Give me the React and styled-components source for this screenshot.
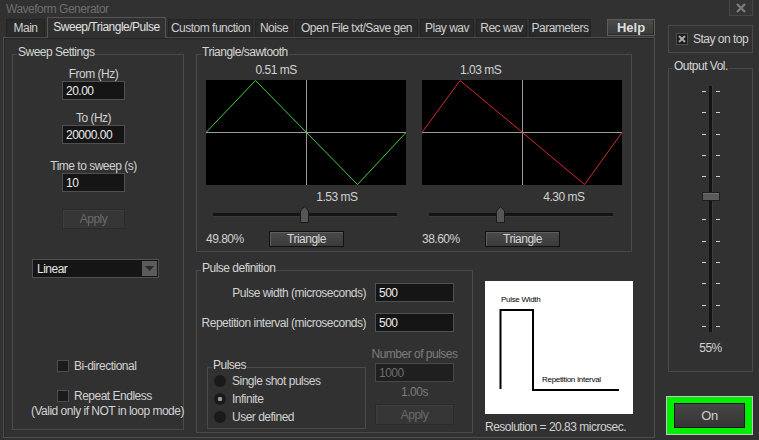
import React from 'react';
import styled, { createGlobalStyle } from 'styled-components';

const GlobalStyle = createGlobalStyle`
  html, body {
    margin: 0;
    padding: 0;
    background: #313131;
  }
  body {
    font-family: "Liberation Sans", Arial, sans-serif;
    font-size: 12px;
    letter-spacing: -0.5px;
    color: #d2d2d2;
  }
  * { box-sizing: border-box; }
`;

const tabs = [
    { label: 'Main', width: 39 },
    { label: 'Sweep/Triangle/Pulse', width: 119, active: true },
    { label: 'Custom function', width: 85 },
    { label: 'Noise', width: 38 },
    { label: 'Open File txt/Save gen', width: 123 },
    { label: 'Play wav', width: 54 },
    { label: 'Rec wav', width: 51 },
    { label: 'Parameters', width: 62 },
];

// peak / trough are x positions inside the 200px plot
const channels = [
    { color: '#3fd23f', peak: 49.5, trough: 151.5, top: '0.51 mS', bottom: '1.53 mS', value: 49.8 },
    { color: '#d42a2a', peak: 38, trough: 162.5, top: '1.03 mS', bottom: '4.30 mS', value: 38.6 },
];

const TRACK_LEFT = 7;
const TRACK_WIDTH = 184;
const VOL_HEIGHT = 246;

function Channel({ ch }) {
    const thumbLeft = TRACK_LEFT + (ch.value / 100) * TRACK_WIDTH - 4.5;
    return (
        <ChannelCol>
            <PeakLabel style={{ marginLeft: ch.peak }}>{ch.top}</PeakLabel>
            <Plot width="200" height="105">
                <rect width="200" height="105" fill="#000" />
                <line x1="0" y1="52.5" x2="200" y2="52.5" stroke="#9a9a9a" />
                <line x1="100.5" y1="0" x2="100.5" y2="105" stroke="#9a9a9a" />
                <polyline
                    points={`0,52.5 ${ch.peak},0.5 100.5,52.5 ${ch.trough},104.5 200,52.5`}
                    stroke={ch.color}
                    fill="none"
                />
            </Plot>
            <TroughLabel style={{ width: ch.trough }}>{ch.bottom}</TroughLabel>
            <HSlider>
                <HTrack />
                <HThumb width="9" height="17" style={{ left: thumbLeft }}>
                    <path d="M0.5 16.5 V5 L4.5 0.5 L8.5 5 V16.5 Z" fill="#555" stroke="#1a1a1a" />
                </HThumb>
            </HSlider>
            <ChannelFooter>
                <Percent>{ch.value.toFixed(2)}%</Percent>
                <Button $w={75} $h={16}>Triangle</Button>
            </ChannelFooter>
        </ChannelCol>
    );
}

function CheckRow({ label, checked, ml, mt }) {
    return (
        <CheckLine $ml={ml} $mt={mt}>
            <CheckBox>
                {checked && (
                    <svg width="10" height="10">
                        <path d="M2 2 L8 8 M8 2 L2 8" stroke="#a8a8a8" strokeWidth="2" />
                    </svg>
                )}
            </CheckBox>
            <span>{label}</span>
        </CheckLine>
    );
}

function Radio({ label, checked }) {
    return (
        <RadioLine>
            <RadioDot $checked={checked} />
            <span>{label}</span>
        </RadioLine>
    );
}

export default function App() {
    const volThumbTop = (1 - 0.55) * VOL_HEIGHT - 4.5;
    return (
        <>
            <GlobalStyle />
            <Window>
                <TitleBar>
                    <Title>Waveform Generator</Title>
                    <CloseBox>
                        <svg width="10" height="10">
                            <path d="M1 1 L9 9 M9 1 L1 9" stroke="#7a7a7a" strokeWidth="2.4" />
                        </svg>
                    </CloseBox>
                </TitleBar>
                <Body>
                    <Main>
                        <TabBar>
                            {tabs.map(t => (
                                <Tab key={t.label} $w={t.width} $active={t.active}>{t.label}</Tab>
                            ))}
                            <HelpButton>Help</HelpButton>
                        </TabBar>
                        <Panel>
                            <Group $w={172} $h={384}>
                                <Legend>Sweep Settings</Legend>
                                <SweepBody>
                                    <Stack>
                                        <Caption>From (Hz)</Caption>
                                        <Field $w={63} readOnly value="20.00" />
                                        <Caption $mt={11}>To (Hz)</Caption>
                                        <Field $w={63} readOnly value="20000.00" />
                                        <Caption $mt={15}>Time to sweep (s)</Caption>
                                        <Field $w={63} readOnly value="10" />
                                        <Button $w={63} $h={20} $mt={17} disabled>Apply</Button>
                                    </Stack>
                                    <Select>
                                        <span>Linear</span>
                                        <SelectArrow>
                                            <svg width="9" height="5">
                                                <path d="M0 0 H9 L4.5 5 Z" fill="#2a2a2a" />
                                            </svg>
                                        </SelectArrow>
                                    </Select>
                                    <CheckRow label="Bi-directional" ml={44} mt={81} />
                                    <CheckRow label="Repeat Endless" ml={44} mt={16} />
                                    <Note>(Valid only if NOT in loop mode)</Note>
                                </SweepBody>
                            </Group>
                            <RightArea>
                                <Group $w={436} $h={206}>
                                    <Legend>Triangle/sawtooth</Legend>
                                    <ChannelRow>
                                        {channels.map(ch => <Channel key={ch.top} ch={ch} />)}
                                    </ChannelRow>
                                </Group>
                                <PulseRow>
                                    <Group $w={277} $h={171}>
                                        <Legend>Pulse definition</Legend>
                                        <FieldRow $mt={5}>
                                            <RowLabel>Pulse width (microseconds)</RowLabel>
                                            <Field $w={79} readOnly value="500" />
                                        </FieldRow>
                                        <FieldRow $mt={11}>
                                            <RowLabel>Repetition interval (microseconds)</RowLabel>
                                            <Field $w={79} readOnly value="500" />
                                        </FieldRow>
                                        <PulseLower>
                                            <PulsesGroup $w={159} $h={70}>
                                                <Legend>Pulses</Legend>
                                                <RadioList>
                                                    <Radio label="Single shot pulses" />
                                                    <Radio label="Infinite" checked />
                                                    <Radio label="User defined" />
                                                </RadioList>
                                            </PulsesGroup>
                                            <CountCol>
                                                <Caption $dim>Number of pulses</Caption>
                                                <Field $w={79} $mt={2} disabled value="1000" readOnly />
                                                <Caption $dim $mt={3}>1.00s</Caption>
                                                <Button $w={79} $h={21} $mt={5} disabled>Apply</Button>
                                            </CountCol>
                                        </PulseLower>
                                    </Group>
                                    <PreviewCol>
                                        <Preview width="148" height="133">
                                            <rect width="148" height="133" fill="#fff" />
                                            <path d="M15.5 108 V29 H48 V109 H134" stroke="#000" strokeWidth="2" fill="none" />
                                            <PreviewText x="16" y="21">Pulse Width</PreviewText>
                                            <PreviewText x="57" y="101">Repetition Interval</PreviewText>
                                        </Preview>
                                        <Caption $mt={6}>Resolution = 20.83 microsec.</Caption>
                                    </PreviewCol>
                                </PulseRow>
                            </RightArea>
                        </Panel>
                    </Main>
                    <Side>
                        <StayBox>
                            <CheckRow label="Stay on top" checked />
                        </StayBox>
                        <VolGroup $w={85} $h={312}>
                            <Legend>Output Vol.</Legend>
                            <VSlider>
                                <TickCol>
                                    {Array.from({ length: 12 }).map((_, i) => <Tick key={i} />)}
                                </TickCol>
                                <VTrack />
                                <TickCol>
                                    {Array.from({ length: 12 }).map((_, i) => <Tick key={i} />)}
                                </TickCol>
                                <VThumb style={{ top: volThumbTop }} />
                            </VSlider>
                            <VolValue>55%</VolValue>
                        </VolGroup>
                        <OnFrame>
                            <OnButton>On</OnButton>
                        </OnFrame>
                    </Side>
                </Body>
            </Window>
        </>
    );
}

const Window = styled.div`
    width: 759px;
    height: 440px;
    overflow: hidden;
    background: #313131;
`
const TitleBar = styled.div`
    height: 17px;
    display: flex;
    align-items: center;
    padding-left: 6px;
`
const Title = styled.span`
    color: #6e6e6e;
    font-size: 12px;
`
const CloseBox = styled.div`
    align-self: flex-start;
    margin-left: auto;
    margin-right: 6px;
    width: 24px;
    height: 16px;
    border: 1px solid #474747;
    border-top: none;
    background: #343434;
    display: flex;
    align-items: center;
    justify-content: center;
`
const Body = styled.div`
    display: flex;
    height: 423px;
`
const Main = styled.div`
    margin-left: 3px;
    width: 652px;
    display: flex;
    flex-direction: column;
`
const TabBar = styled.div`
    height: 20px;
    display: flex;
    align-items: flex-end;
    gap: 2px;
    padding-left: 3px;
    position: relative;
    z-index: 1;
`
const Tab = styled.div`
    width: ${p => p.$w}px;
    height: ${p => (p.$active ? 21 : 18)}px;
    margin-bottom: ${p => (p.$active ? -1 : 0)}px;
    display: flex;
    align-items: center;
    justify-content: center;
    white-space: nowrap;
    background: ${p => (p.$active ? '#313131' : '#2a2a2a')};
    border: 1px solid ${p => (p.$active ? '#555' : '#232323')};
    border-bottom: ${p => (p.$active ? 'none' : '1px solid #232323')};
    color: ${p => (p.$active ? '#e2e2e2' : '#cfcfcf')};
    padding-bottom: ${p => (p.$active ? 2 : 0)}px;
`
const HelpButton = styled.div`
    margin-left: auto;
    margin-bottom: 1px;
    width: 48px;
    height: 17px;
    display: flex;
    align-items: center;
    justify-content: center;
    font-weight: bold;
    font-size: 13px;
    letter-spacing: 0;
    color: #dedede;
    background: linear-gradient(#4b4b4b, #393939);
    border: 1px solid #5c5c5c;
    box-shadow: inset -1px -1px 0 #2a2a2a;
`
const Panel = styled.div`
    height: 401px;
    border: 1px solid #4e4e4e;
    box-shadow: inset 1px 1px 0 #262626;
    display: flex;
    gap: 12px;
    padding: 8px 0 0 8px;
`
const Group = styled.fieldset`
    margin: 0;
    padding: 0;
    min-width: 0;
    width: ${p => p.$w}px;
    height: ${p => p.$h}px;
    border: 1px solid #4a4a4a;
    flex-shrink: 0;
`
const Legend = styled.legend`
    margin-left: 4px;
    padding: 0 1px 4px;
    line-height: 12px;
    color: #d6d6d6;
    white-space: nowrap;
`
const SweepBody = styled.div`
    display: flex;
    flex-direction: column;
    align-items: flex-start;
    padding-top: 5px;
`
const Stack = styled.div`
    margin-left: 49px;
    width: 63px;
    display: flex;
    flex-direction: column;
    align-items: center;
`
const Caption = styled.div`
    line-height: 14px;
    white-space: nowrap;
    margin-top: ${p => p.$mt || 0}px;
    color: ${p => (p.$dim ? '#7c7c7c' : '#d2d2d2')};
`
const Field = styled.input`
    display: block;
    width: ${p => p.$w}px;
    height: 19px;
    margin: ${p => p.$mt || 0}px 0 0;
    padding: 0 0 0 3px;
    font: inherit;
    letter-spacing: inherit;
    color: #ececec;
    background: #151515;
    border: 1px solid #505050;
    outline: none;

    &:disabled {
        color: #6e6e6e;
        background: #1f1f1f;
        border-color: #484848;
    }
`
const Button = styled.button`
    width: ${p => p.$w}px;
    height: ${p => p.$h}px;
    margin: ${p => p.$mt || 0}px 0 0;
    padding: 0;
    font: inherit;
    font-size: 12px;
    letter-spacing: inherit;
    color: #d8d8d8;
    background: linear-gradient(#4a4a4a, #3b3b3b);
    border: 1px solid #111;
    box-shadow: inset 1px 1px 0 #5e5e5e;

    &:disabled {
        color: #6a6a6a;
        background: #363636;
        border-color: #2b2b2b;
        box-shadow: inset 1px 1px 0 #3e3e3e;
    }
`
const Select = styled.div`
    margin: 30px 0 0 19px;
    width: 127px;
    height: 19px;
    display: flex;
    align-items: center;
    padding-left: 4px;
    background: #151515;
    border: 1px solid #505050;
    color: #e6e6e6;

    span { flex: 1; }
`
const SelectArrow = styled.div`
    width: 15px;
    height: 15px;
    margin-right: 1px;
    background: #5b5b5b;
    display: flex;
    align-items: center;
    justify-content: center;
`
const CheckLine = styled.div`
    display: flex;
    align-items: center;
    gap: 5px;
    height: 14px;
    margin: ${p => p.$mt || 0}px 0 0 ${p => p.$ml || 0}px;
    white-space: nowrap;
`
const CheckBox = styled.div`
    width: 12px;
    height: 12px;
    background: #1b1b1b;
    border: 1px solid #4e4e4e;
    display: flex;
    align-items: center;
    justify-content: center;
`
const Note = styled.div`
    margin: 1px 0 0 18px;
    line-height: 14px;
    white-space: nowrap;
`
const RightArea = styled.div`
    display: flex;
    flex-direction: column;
`
const ChannelRow = styled.div`
    display: flex;
    gap: 16px;
    padding: 1px 0 0 9px;
`
const ChannelCol = styled.div`
    width: 200px;
    display: flex;
    flex-direction: column;
`
const PeakLabel = styled.div`
    line-height: 14px;
    white-space: nowrap;
`
const Plot = styled.svg`
    display: block;
    margin-top: 3px;
`
const TroughLabel = styled.div`
    line-height: 14px;
    margin-top: 5px;
    text-align: right;
    white-space: nowrap;
`
const HSlider = styled.div`
    position: relative;
    height: 17px;
    margin-top: 2px;
`
const HTrack = styled.div`
    margin: 7px 0 0 ${TRACK_LEFT}px;
    width: ${TRACK_WIDTH}px;
    height: 3px;
    background: #141414;
    box-shadow: 0 1px 0 #3c3c3c;
`
const HThumb = styled.svg`
    position: absolute;
    top: 0;
    display: block;
`
const ChannelFooter = styled.div`
    display: flex;
    align-items: center;
    margin-top: 8px;
`
const Percent = styled.div`
    width: 63px;
    white-space: nowrap;
`
const PulseRow = styled.div`
    display: flex;
    align-items: flex-start;
    margin-top: 10px;
`
const FieldRow = styled.div`
    display: flex;
    align-items: center;
    margin-top: ${p => p.$mt}px;
`
const RowLabel = styled.div`
    width: 169px;
    text-align: right;
    white-space: nowrap;
    margin-right: 9px;
`
const PulseLower = styled.div`
    display: flex;
    align-items: flex-start;
    margin-top: 15px;
`
const PulsesGroup = styled(Group)`
    margin: 12px 0 0 10px;
`
const RadioList = styled.div`
    margin-top: -3px;
`
const RadioLine = styled.div`
    display: flex;
    align-items: center;
    gap: 6px;
    height: 18px;
    padding-left: 6px;
    white-space: nowrap;
`
const RadioDot = styled.div`
    width: 12px;
    height: 12px;
    border-radius: 50%;
    background: ${p => (p.$checked ? 'radial-gradient(circle, #9a9a9a 0 2px, #1a1a1a 2.5px)' : '#1a1a1a')};
`
const CountCol = styled.div`
    margin-left: 9px;
    width: 79px;
    display: flex;
    flex-direction: column;
    align-items: center;
`
const PreviewCol = styled.div`
    margin: 19px 0 0 12px;
    width: 148px;
`
const Preview = styled.svg`
    display: block;
`
const PreviewText = styled.text`
    font-family: "Liberation Sans", Arial, sans-serif;
    font-size: 8px;
    letter-spacing: -0.3px;
    fill: #000;
`
const Side = styled.div`
    margin-left: 11px;
    width: 87px;
    display: flex;
    flex-direction: column;
`
const StayBox = styled.div`
    margin: 8px 0 0 2px;
    width: 85px;
    height: 28px;
    border: 1px solid #4a4a4a;
    display: flex;
    align-items: center;
    padding-left: 7px;
`
const VolGroup = styled(Group)`
    margin: 7px 0 0 2px;
`
const VSlider = styled.div`
    position: relative;
    width: 18px;
    height: ${VOL_HEIGHT}px;
    margin: 10px auto 0;
    display: flex;
    justify-content: space-between;
`
const TickCol = styled.div`
    width: 4px;
    display: flex;
    flex-direction: column;
    justify-content: space-between;
    padding: 5px 0;
`
const Tick = styled.div`
    height: 1px;
    background: #cfcfcf;
`
const VTrack = styled.div`
    width: 3px;
    background: #131313;
    box-shadow: 1px 0 0 #3c3c3c;
`
const VThumb = styled.div`
    position: absolute;
    left: 0;
    width: 18px;
    height: 9px;
    background: #5a5a5a;
    border: 1px solid #1e1e1e;
    box-shadow: inset 0 1px 0 #6c6c6c;
`
const VolValue = styled.div`
    margin-top: 9px;
    line-height: 14px;
    text-align: center;
`
const OnFrame = styled.div`
    margin-top: 24px;
    width: 87px;
    height: 39px;
    background: #00f000;
    border: 1px solid #c6c6c6;
    display: flex;
    align-items: center;
    justify-content: center;
`
const OnButton = styled.div`
    width: 71px;
    height: 25px;
    display: flex;
    align-items: center;
    justify-content: center;
    font-size: 13px;
    color: #cfcfcf;
    background: linear-gradient(#464646, #353535);
    border: 1px solid #121212;
`
